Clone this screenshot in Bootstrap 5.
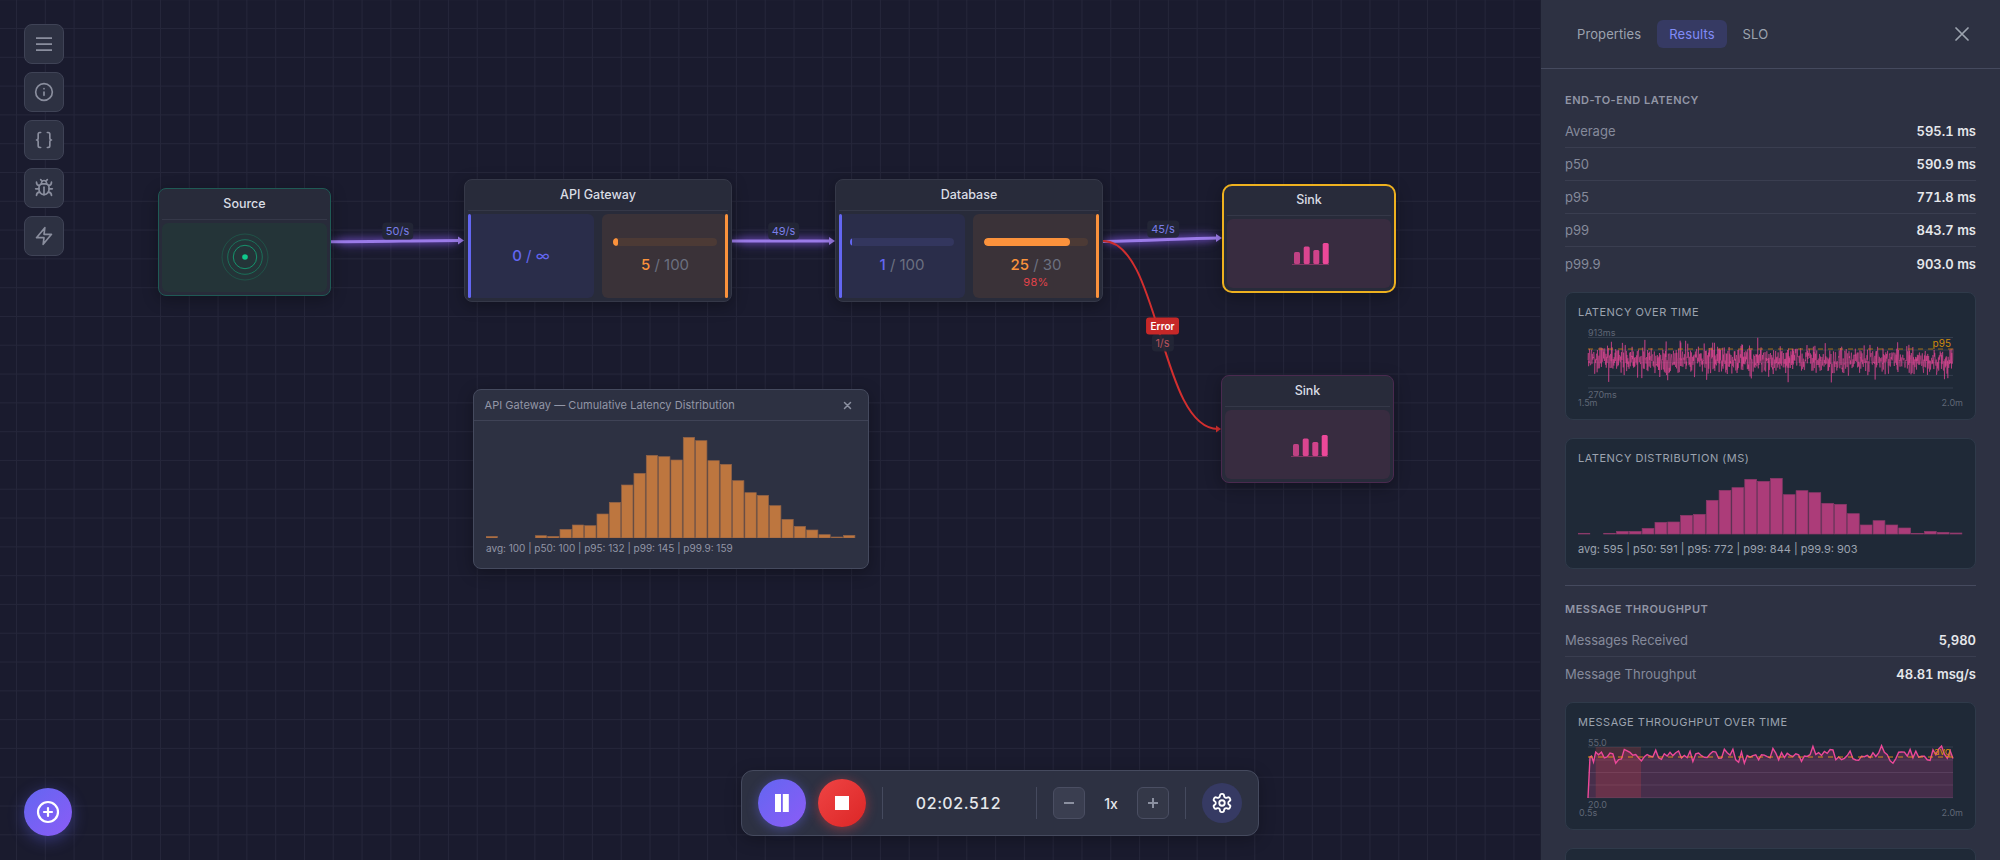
<!doctype html>
<html lang="en">
<head>
<meta charset="utf-8">
<title>Simulation</title>
<link href="https://cdn.jsdelivr.net/npm/bootstrap@5.3.0/dist/css/bootstrap.min.css" rel="stylesheet">
<style>
html,body{height:860px;overflow:hidden;background:#1a1b2e;font-family:Inter,"Liberation Sans",sans-serif}
.sim-canvas{position:relative;width:1540px;height:860px;overflow:hidden;background-color:#1a1b2e;
 background-image:linear-gradient(#25263a 1px,transparent 1px),linear-gradient(90deg,#25263a 1px,transparent 1px);
 background-size:28.8px 28.8px;background-position:16px 28px}
.edge-layer{position:absolute;left:0;top:0}
.glow{filter:drop-shadow(0 0 3px rgba(139,92,246,.7))}
.halo{filter:blur(5px)}
.tool-stack{position:absolute;left:24px;top:24px;gap:8px}
.tool-btn{width:40px;height:40px;padding:0;border-radius:8px;background:#2d3142;border:1px solid #3f4356;color:#8a8e9e;display:flex;align-items:center;justify-content:center}
.fab{position:absolute;left:24px;top:788px;width:48px;height:48px;padding:0;background:linear-gradient(135deg,#6366f1,#8b5cf6);border:0;box-shadow:0 4px 16px rgba(99,102,241,.4);display:flex;align-items:center;justify-content:center}
.flow-node{position:absolute;background:#282b3a;border:1px solid #353848;border-radius:8px;padding:0 3px 3px;box-shadow:0 4px 16px rgba(0,0,0,.3);display:flex;flex-direction:column;z-index:2}
.node-title{color:#dadde5;font-size:12.5px;font-weight:500;text-align:center;border-bottom:1px solid #353848;height:31px;line-height:29px;margin-bottom:3px;flex:none}
.node-body{flex:1;display:flex;gap:8px;min-height:0}
.node-source{left:158px;top:188px;width:173px;height:107.5px;border-color:#1f5a55}
.node-api{left:464px;top:179px;width:268px;height:123px}
.node-db{left:835px;top:179px;width:268px;height:123px}
.node-sink-a{left:1222px;top:184px;width:174px;height:108.5px;border:2px solid #eeb11f;border-radius:10px;padding:0 3px 3px}
.node-sink-a .node-title{height:30px;line-height:28px}
.node-sink-b{left:1221px;top:375px;width:173px;height:108px;border-color:#4a2a4f}
.zone{flex:1;border-radius:6px;position:relative;display:flex;flex-direction:column;align-items:center;justify-content:center;min-width:0}
.zone-source{background:#243438}
.zone-sink{background:#382c40}
.zone-in{background:#2a2d4a}
.zone-out{background:#3a3238}
.zone-in::before{content:"";position:absolute;left:0;top:0;bottom:0;width:3px;border-radius:2px;background:#6366f1}
.zone-out::after{content:"";position:absolute;right:0;top:0;bottom:0;width:3px;border-radius:2px;background:#fb923c}
.cap-bar{width:104px;height:8px;border-radius:4px;margin-bottom:10px;overflow:hidden}
.zone-in .cap-bar{background:#33365e}
.zone-out .cap-bar{background:#4c3a35}
.cap-bar>i{display:block;height:100%;border-radius:4px}
.zone-in .cap-bar>i{background:#6366f1}
.zone-out .cap-bar>i{background:#fb923c}
.cap-num{font-size:15px;line-height:18px;color:#6b7080;font-weight:400}
.zone-in .cap-num b{color:#6366f1;font-weight:500}
.zone-out .cap-num b{color:#fb923c;font-weight:500}
.cap-inf{color:#6366f1}
.cap-pct{font-size:11px;line-height:12px;color:#e0424a;font-weight:400;letter-spacing:.3px;margin-top:2px;margin-bottom:-14px}
.edge-tag{position:absolute;z-index:1;font-size:11px;line-height:17px;height:17px;padding:0 4px;color:#7a7ee8;background:rgba(35,38,54,.92);border-radius:4px;transform:translate(-50%,-50%)}
.tag-50{left:397.5px;top:231px}
.tag-49{left:783.5px;top:231px}
.tag-45{left:1163px;top:229px}
.tag-1{left:1162.5px;top:342.5px;color:#b5525c}
.tag-error{position:absolute;z-index:3;left:1162.5px;top:325.5px;transform:translate(-50%,-50%);height:17px;line-height:17px;padding:0 5px;border-radius:3px;background:#c62828;color:#fff;font-size:10px;font-weight:600}
.hist-pop{position:absolute;z-index:2;left:473px;top:389px;width:396px;height:180px;background:#2d3142;border:1px solid #454a5e;border-radius:8px;box-shadow:0 4px 16px rgba(0,0,0,.3)}
.hist-head{height:31px;padding:0 16px 0 10.5px;border-bottom:1px solid #3f4356;color:#9296a6;font-size:11px;letter-spacing:.05px}
.hist-body{padding:9px 12px 0}
.chart-svg{display:block}
.stat-line{font-size:10px;line-height:14px;color:#9296a6;margin-top:3px;white-space:nowrap}
.run-bar{position:absolute;z-index:4;left:741px;top:770px;width:518px;height:66px;background:#2d3142;border:1px solid #454a5e;border-radius:12px;padding:0 16px;box-shadow:0 4px 16px rgba(0,0,0,.25)}
.round-btn{width:48px;height:48px;padding:0;border:0;border-radius:50%;display:flex;align-items:center;justify-content:center;flex:none}
.btn-pause{background:linear-gradient(135deg,#6366f1,#8b5cf6);box-shadow:0 2px 12px rgba(99,102,241,.45);margin-right:12px}
.btn-stop{background:linear-gradient(135deg,#ef4444,#dc2626);box-shadow:0 2px 12px rgba(239,68,68,.45);margin-right:16px}
.bar-sep{width:1px;height:32px;background:#454a5e;flex:none}
.clock{width:151px;text-align:center;color:#e5e7eb;font-size:16px;font-weight:500;letter-spacing:.5px;font-variant-numeric:tabular-nums;flex:none;margin-right:2px}
.step-btn{width:32px;height:32px;padding:0;border-radius:6px;background:#3a3e50;border:1px solid #4a4e62;display:flex;align-items:center;justify-content:center;flex:none}
.step-a{margin-left:16px}
.step-b{background:#343848;margin-right:16px}
.speed{width:52px;text-align:center;color:#e5e7eb;font-size:14px;font-weight:500;flex:none}
.gear-btn{width:40px;height:40px;padding:0;border:0;border-radius:50%;background:#363a63;display:flex;align-items:center;justify-content:center;margin-left:16px;flex:none}
.side-panel{width:460px;height:860px;background:#2d3142;border-left:1px solid #1d1f30;overflow:hidden;flex:none}
.side-head{height:69px;border-bottom:1px solid #454a5e;padding:0 24px}
.side-head .nav-link{height:28px;padding:0 12px;line-height:28px;font-size:13px;letter-spacing:.1px;color:#9ca3af;border-radius:6px;background:transparent}
.side-head .nav-link.active{background:#363a63;color:#818cf8}
.side-close{width:20px;height:20px;padding:0;border:0;background:transparent;margin-right:4px;display:flex;align-items:center;justify-content:center}
.side-body{padding:23px 24px 0}
.sec-head{font-size:11px;line-height:16px;font-weight:600;letter-spacing:.5px;color:#9296a6;text-transform:uppercase;margin-bottom:7px}
.kv-row{height:33px;padding-top:2px;border-bottom:1px solid #3a3e50;font-size:13px}
.kv-key{color:#858a9b}
.kv-val{color:#e5e7eb;font-weight:600;font-variant-numeric:tabular-nums}
.chart-box{background:#1f2937;border:1px solid #2f3a4a;border-radius:8px;padding:12px;margin-top:12px;color:#9ca3af}
.chart-box+.chart-box{margin-top:18px}
.chart-title{font-size:11px;line-height:14px;letter-spacing:.5px;color:#9ca3af;text-transform:uppercase;margin-bottom:6px;font-weight:400}
.box-stats{font-size:11px;margin-top:5px;color:#9ca3af}
.chart-svg text{font-family:Inter,"Liberation Sans",sans-serif;font-size:9px;fill:#5f6776}
.chart-svg text.mark{fill:#d08a0c;font-size:10px}
.sec-rule{border-top:1px solid #454a5e;margin:16px 0 15px;opacity:1}
</style>
</head>
<body class="d-flex">
<main class="sim-canvas">
  <svg class="edge-layer" width="1540" height="860" viewBox="0 0 1540 860" fill="none">
    <g class="halo" stroke="#8b5cf6" stroke-opacity=".32" stroke-width="9">
      <path d="M340 241.8C380 241.8 420 240.5 455 240.5"/>
      <path d="M740 241H826"/>
      <path d="M1110 241.5C1150 241 1180 238.5 1212 238"/>
    </g>
    <g class="glow">
      <path d="M331 241.8C380 241.8 420 240.5 460 240.5" stroke="#9b7be8" stroke-width="3"/>
      <path d="M732 241H831" stroke="#9b7be8" stroke-width="3"/>
      <path d="M1103 241.5C1150 241 1180 238.5 1218 238" stroke="#9b7be8" stroke-width="3"/>
    </g>
    <polygon points="458,236.5 464,240.5 458,244.5" fill="#9b7be8"/>
    <polygon points="829,237 835,241 829,245" fill="#9b7be8"/>
    <polygon points="1216,234 1222,238 1216,242" fill="#9b7be8"/>
    <path d="M1103 241C1160 241 1160 429 1218 429" stroke="#d32f2f" stroke-width="2"/>
    <polygon points="1216,425.5 1221,429 1216,432.5" fill="#d32f2f"/>
  </svg>

  <div class="tool-stack d-flex flex-column">
    <button class="btn tool-btn" aria-label="Menu"><svg width="20" height="20" viewBox="0 0 24 24" fill="none" stroke="currentColor" stroke-width="2.1"><path d="M2.4 4.8h19.2M2.4 12h19.2M2.4 19.2h19.2"/></svg></button>
    <button class="btn tool-btn" aria-label="Info"><svg width="20" height="20" viewBox="0 0 24 24" fill="none" stroke="currentColor" stroke-width="2" stroke-linecap="round" stroke-linejoin="round"><circle cx="12" cy="12" r="10"/><path d="M12 16v-4M12 8h.01"/></svg></button>
    <button class="btn tool-btn" aria-label="Code"><svg width="20" height="20" viewBox="0 0 24 24" fill="none" stroke="currentColor" stroke-width="2" stroke-linecap="round" stroke-linejoin="round"><path d="M8 3H7a2 2 0 0 0-2 2v5a2 2 0 0 1-2 2 2 2 0 0 1 2 2v5c0 1.1.9 2 2 2h1"/><path d="M16 21h1a2 2 0 0 0 2-2v-5c0-1.1.9-2 2-2a2 2 0 0 1-2-2V5a2 2 0 0 0-2-2h-1"/></svg></button>
    <button class="btn tool-btn" aria-label="Debug"><svg width="20" height="20" viewBox="0 0 24 24" fill="none" stroke="currentColor" stroke-width="2" stroke-linecap="round" stroke-linejoin="round"><path d="m8 2 1.88 1.88"/><path d="M14.12 3.88 16 2"/><path d="M9 7.13v-1a3.003 3.003 0 1 1 6 0v1"/><path d="M12 20c-3.3 0-6-2.7-6-6v-3a4 4 0 0 1 4-4h4a4 4 0 0 1 4 4v3c0 3.3-2.7 6-6 6"/><path d="M12 20v-9"/><path d="M6.53 9C4.6 8.8 3 7.1 3 5"/><path d="M6 13H2"/><path d="M3 21c0-2.1 1.7-3.9 3.8-4"/><path d="M20.97 5c0 2.1-1.6 3.8-3.5 4"/><path d="M22 13h-4"/><path d="M17.2 17c2.1.1 3.8 1.9 3.8 4"/></svg></button>
    <button class="btn tool-btn" aria-label="Quick"><svg width="20" height="20" viewBox="0 0 24 24" fill="none" stroke="currentColor" stroke-width="2" stroke-linecap="round" stroke-linejoin="round"><path d="M13 2 3 14h9l-1 8 10-12h-9l1-8z"/></svg></button>
  </div>

  <div class="flow-node node-source">
    <div class="node-title">Source</div>
    <div class="node-body"><div class="zone zone-source">
      <svg width="50" height="50" viewBox="0 0 50 50" fill="none"><circle cx="25" cy="25" r="23" stroke="#10b981" stroke-opacity=".22" stroke-width="1"/><circle cx="25" cy="25" r="17.3" stroke="#10b981" stroke-opacity=".45" stroke-width="1"/><circle cx="25" cy="25" r="11.7" stroke="#10b981" stroke-opacity=".7" stroke-width="1"/><circle cx="25" cy="25" r="2.8" fill="#10c98c"/></svg>
    </div></div>
  </div>

  <span class="edge-tag tag-50">50/s</span>

  <div class="flow-node node-api">
    <div class="node-title">API Gateway</div>
    <div class="node-body">
      <div class="zone zone-in"><div class="cap-num"><b>0</b> <span class="cap-inf">/ ∞</span></div></div>
      <div class="zone zone-out"><div class="cap-bar"><i data-w="5"></i></div><div class="cap-num"><b>5</b> / 100</div></div>
    </div>
  </div>

  <span class="edge-tag tag-49">49/s</span>

  <div class="flow-node node-db">
    <div class="node-title">Database</div>
    <div class="node-body">
      <div class="zone zone-in"><div class="cap-bar"><i data-w="1.5"></i></div><div class="cap-num"><b>1</b> / 100</div></div>
      <div class="zone zone-out"><div class="cap-bar"><i data-w="83"></i></div><div class="cap-num"><b>25</b> / 30</div><div class="cap-pct">98%</div></div>
    </div>
  </div>

  <span class="edge-tag tag-45">45/s</span>

  <div class="flow-node node-sink-a">
    <div class="node-title">Sink</div>
    <div class="node-body"><div class="zone zone-sink">
      <svg width="42" height="24" viewBox="0 0 42 24"><rect x="6" y="11" width="6" height="12" rx="1.5" fill="#ec4899" fill-opacity=".75"/><rect x="15.7" y="5.5" width="6" height="17.5" rx="1.5" fill="#ec4899" fill-opacity=".9"/><rect x="25.3" y="9" width="6" height="14" rx="1.5" fill="#ec4899" fill-opacity=".85"/><rect x="34.7" y="2" width="6" height="21" rx="1.5" fill="#ec4899"/><path d="M4 23.5H41" stroke="#ec4899" stroke-opacity=".4"/></svg>
    </div></div>
  </div>

  <span class="tag-error">Error</span>
  <span class="edge-tag tag-1">1/s</span>

  <div class="flow-node node-sink-b">
    <div class="node-title">Sink</div>
    <div class="node-body"><div class="zone zone-sink">
      <svg width="42" height="24" viewBox="0 0 42 24"><rect x="6" y="11" width="6" height="12" rx="1.5" fill="#ec4899" fill-opacity=".75"/><rect x="15.7" y="5.5" width="6" height="17.5" rx="1.5" fill="#ec4899" fill-opacity=".9"/><rect x="25.3" y="9" width="6" height="14" rx="1.5" fill="#ec4899" fill-opacity=".85"/><rect x="34.7" y="2" width="6" height="21" rx="1.5" fill="#ec4899"/><path d="M4 23.5H41" stroke="#ec4899" stroke-opacity=".4"/></svg>
    </div></div>
  </div>

  <section class="hist-pop">
    <div class="hist-head d-flex align-items-center justify-content-between">
      <span>API Gateway — Cumulative Latency Distribution</span>
      <svg width="9" height="9" viewBox="0 0 9 9" stroke="#8b90a0" stroke-width="1.5" stroke-linecap="round"><path d="M1.5 1.5l6 6M7.5 1.5l-6 6"/></svg>
    </div>
    <div class="hist-body">
      <svg id="histA" class="chart-svg" width="370" height="108" viewBox="0 0 370 108"></svg>
      <div class="stat-line">avg: 100 | p50: 100 | p95: 132 | p99: 145 | p99.9: 159</div>
    </div>
  </section>

  <div class="run-bar d-flex align-items-center">
    <button class="btn round-btn btn-pause" aria-label="Pause"><svg width="20" height="18" viewBox="0 0 20 18" fill="#fff"><rect x="3" y="0" width="6" height="18"/><rect x="10.8" y="0" width="6" height="18"/></svg></button>
    <button class="btn round-btn btn-stop" aria-label="Stop"><svg width="14" height="14" viewBox="0 0 14 14" fill="#fff"><rect width="14" height="14"/></svg></button>
    <div class="bar-sep"></div>
    <div class="clock">02:02.512</div>
    <div class="bar-sep"></div>
    <button class="btn step-btn step-a" aria-label="Slower"><svg width="12" height="12" viewBox="0 0 12 12" stroke="#8b90a0" stroke-width="2"><path d="M1 6h10"/></svg></button>
    <div class="speed">1x</div>
    <button class="btn step-btn step-b" aria-label="Faster"><svg width="12" height="12" viewBox="0 0 12 12" stroke="#8b90a0" stroke-width="2"><path d="M1 6h10M6 1v10"/></svg></button>
    <div class="bar-sep"></div>
    <button class="btn gear-btn" aria-label="Settings"><svg width="22" height="22" viewBox="0 0 24 24" fill="none" stroke="#fff" stroke-width="2" stroke-linecap="round" stroke-linejoin="round"><path d="M12.22 2h-.44a2 2 0 0 0-2 2v.18a2 2 0 0 1-1 1.73l-.43.25a2 2 0 0 1-2 0l-.15-.08a2 2 0 0 0-2.73.73l-.22.38a2 2 0 0 0 .73 2.73l.15.1a2 2 0 0 1 1 1.72v.51a2 2 0 0 1-1 1.74l-.15.09a2 2 0 0 0-.73 2.73l.22.38a2 2 0 0 0 2.73.73l.15-.08a2 2 0 0 1 2 0l.43.25a2 2 0 0 1 1 1.73V20a2 2 0 0 0 2 2h.44a2 2 0 0 0 2-2v-.18a2 2 0 0 1 1-1.73l.43-.25a2 2 0 0 1 2 0l.15.08a2 2 0 0 0 2.73-.73l.22-.39a2 2 0 0 0-.73-2.73l-.15-.08a2 2 0 0 1-1-1.74v-.5a2 2 0 0 1 1-1.74l.15-.09a2 2 0 0 0 .73-2.73l-.22-.38a2 2 0 0 0-2.73-.73l-.15.08a2 2 0 0 1-2 0l-.43-.25a2 2 0 0 1-1-1.73V4a2 2 0 0 0-2-2z"/><circle cx="12" cy="12" r="3"/></svg></button>
  </div>

  <button class="btn fab rounded-circle" aria-label="Add"><svg width="24" height="24" viewBox="0 0 24 24" fill="none" stroke="#fff" stroke-width="2.2" stroke-linecap="round"><circle cx="12" cy="12" r="10"/><path d="M8 12h8M12 8v8"/></svg></button>
</main>

<aside class="side-panel">
  <div class="side-head d-flex align-items-center justify-content-between">
    <ul class="nav nav-pills gap-1">
      <li class="nav-item"><span class="nav-link">Properties</span></li>
      <li class="nav-item"><span class="nav-link active">Results</span></li>
      <li class="nav-item"><span class="nav-link">SLO</span></li>
    </ul>
    <button class="side-close" aria-label="Close"><svg width="14" height="14" viewBox="0 0 14 14" stroke="#9ca3af" stroke-width="1.7" stroke-linecap="round"><path d="M1 1l12 12M13 1L1 13"/></svg></button>
  </div>
  <div class="side-body">
    <h6 class="sec-head">End-to-End Latency</h6>
    <div class="kv-row d-flex align-items-center justify-content-between"><span class="kv-key">Average</span><span class="kv-val">595.1 ms</span></div>
    <div class="kv-row d-flex align-items-center justify-content-between"><span class="kv-key">p50</span><span class="kv-val">590.9 ms</span></div>
    <div class="kv-row d-flex align-items-center justify-content-between"><span class="kv-key">p95</span><span class="kv-val">771.8 ms</span></div>
    <div class="kv-row d-flex align-items-center justify-content-between"><span class="kv-key">p99</span><span class="kv-val">843.7 ms</span></div>
    <div class="kv-row border-0 d-flex align-items-center justify-content-between"><span class="kv-key">p99.9</span><span class="kv-val">903.0 ms</span></div>

    <div class="chart-box">
      <div class="chart-title">Latency Over Time</div>
      <svg id="lineA" class="chart-svg" width="385" height="82" viewBox="0 0 385 82" fill="none">
        <path d="M10 12.5H375M10 25H375M10 37.7H375M10 50.4H375M10 63H375" stroke="#343e4e" stroke-width="1"/>
        <path id="lineAp" stroke="#ec4899" stroke-opacity=".55" stroke-width=".9"/>
        <path d="M10 24H375" stroke="#d08a0c" stroke-opacity=".75" stroke-width="1.2" stroke-dasharray="5 5"/>
        <text x="10" y="10.5">913ms</text>
        <text x="10" y="72.5">270ms</text>
        <text x="0" y="81">1.5m</text>
        <text x="385" y="81" text-anchor="end">2.0m</text>
        <text class="mark" x="373" y="22" text-anchor="end">p95</text>
      </svg>
    </div>

    <div class="chart-box">
      <div class="chart-title">Latency Distribution (ms)</div>
      <svg id="histB" class="chart-svg" width="385" height="66" viewBox="0 0 385 66"></svg>
      <div class="stat-line box-stats">avg: 595 | p50: 591 | p95: 772 | p99: 844 | p99.9: 903</div>
    </div>

    <hr class="sec-rule">

    <h6 class="sec-head">Message Throughput</h6>
    <div class="kv-row d-flex align-items-center justify-content-between"><span class="kv-key">Messages Received</span><span class="kv-val">5,980</span></div>
    <div class="kv-row border-0 d-flex align-items-center justify-content-between"><span class="kv-key">Message Throughput</span><span class="kv-val">48.81 msg/s</span></div>

    <div class="chart-box">
      <div class="chart-title">Message Throughput Over Time</div>
      <svg id="lineB" class="chart-svg" width="385" height="82" viewBox="0 0 385 82" fill="none">
        <path d="M10 12H375M10 25H375M10 37.5H375M10 50H375M10 62.7H375" stroke="#343e4e" stroke-width="1"/>
        <path id="lineBa" fill="#ec4899" fill-opacity=".2"/>
        <rect x="17.7" y="12" width="45.3" height="50.7" fill="#ef4444" fill-opacity=".2"/>
        <path id="lineBp" stroke="#ec4899" stroke-width="1.4"/>
        <path d="M10 22H375" stroke="#f59e0b" stroke-opacity=".85" stroke-width="1.2" stroke-dasharray="5 5"/>
        <text x="10" y="10.5">55.0</text>
        <text x="10" y="72.5">20.0</text>
        <text x="1" y="81">0.5s</text>
        <text x="385" y="81" text-anchor="end">2.0m</text>
        <text class="mark" x="373" y="20" text-anchor="end">avg</text>
      </svg>
    </div>

    <div class="chart-box"><div class="chart-title">&nbsp;</div></div>
  </div>
</aside>

<script src="https://cdn.jsdelivr.net/npm/bootstrap@5.3.0/dist/js/bootstrap.bundle.min.js"></script>
<script>
(function(){
  var NS='http://www.w3.org/2000/svg';
  function bars(id,tops,zero,pitch,w,base,fill,stroke){
    var s=document.getElementById(id);
    tops.forEach(function(t,i){
      if(t===null)return;
      var h=(zero-t)/3,r=document.createElementNS(NS,'rect');
      r.setAttribute('x',(i*pitch).toFixed(2));r.setAttribute('y',(base-h).toFixed(2));
      r.setAttribute('width',w);r.setAttribute('height',h.toFixed(2));
      r.setAttribute('fill',fill);r.setAttribute('stroke',stroke);r.setAttribute('stroke-width','.7');
      s.appendChild(r);
    });
  }
  bars('histA',[468,null,null,null,466,468,447,434,436,401,366,314,279,225,229,239,171,181,241,252,301,337,345,376,417,438,449,463,470,465],473,12.33,11.3,108,'#bd763f','#8f6247');
  bars('histB',[760,null,760,754,754,745,727,726,706,703,661,631,623,598,604,595,644,632,638,670,673,701,735,722,735,744,760,754,757,759],762,12.83,11.8,63,'#ac3c79','#8a3a6a');
  document.querySelectorAll('.cap-bar>i').forEach(function(e){e.style.width=e.dataset.w+'%';});
  var a=20240611;
  function rnd(){a=(a+0x6D2B79F5)|0;var t=Math.imul(a^(a>>>15),1|a);t=(t+Math.imul(t^(t>>>7),61|t))^t;return((t^(t>>>14))>>>0)/4294967296;}
  function gauss(){return (rnd()+rnd()+rnd()+rnd()+rnd()+rnd()-3)/.707;}
  var d='M10 35',i,n=1200;
  for(i=1;i<=n;i++){
    var k=rnd()<.08?10.5:6.6;
    var y=35+gauss()*k;y=Math.max(12,Math.min(63,y));
    d+='L'+(10+365*i/n).toFixed(2)+' '+y.toFixed(1);
  }
  document.getElementById('lineAp').setAttribute('d',d);
  var m=125,p='M10 63L12 22L13.5 21L15.5 27L17.7 17';
  for(i=1;i<=m;i++){
    var yy=20.5+gauss()*3.4;yy=Math.max(10,Math.min(31,yy));
    p+='L'+(17.7+357.3*i/m).toFixed(2)+' '+yy.toFixed(1);
  }
  document.getElementById('lineBp').setAttribute('d',p);
  document.getElementById('lineBa').setAttribute('d',p+'L375 63L10 63Z');
})();
</script>
</body>
</html>
